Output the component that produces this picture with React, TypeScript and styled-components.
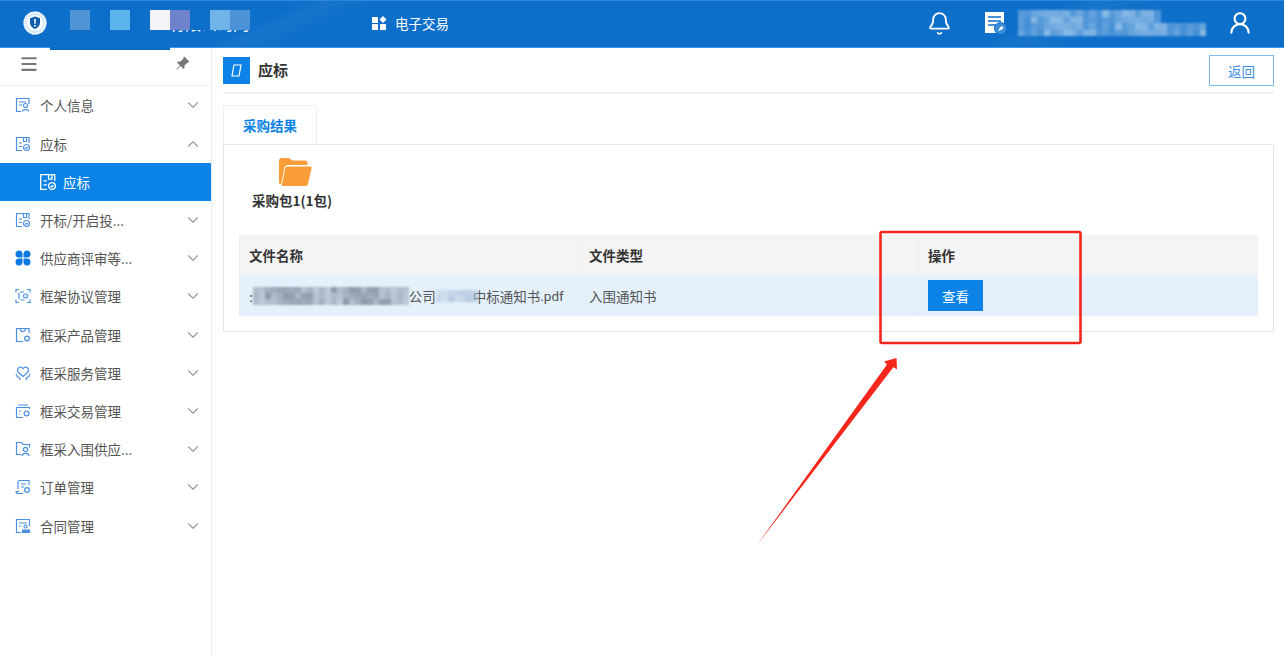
import React from "react"
import styled, { createGlobalStyle } from "styled-components"
import { Bell, ChevronDown, ChevronUp, Menu, UserRound } from "lucide-react"
import { BsPinAngleFill } from "react-icons/bs"

const GlobalStyle = createGlobalStyle`
  html, body {
    margin: 0;
    padding: 0;
    width: 1284px;
    height: 656px;
    overflow: hidden;
    background: #fff;
  }
  body {
    font-family: "Noto Sans CJK SC", "Noto Sans", sans-serif;
    font-size: 13.5px;
    color: #555;
  }
  * { box-sizing: border-box; }
`

const Page = styled.div`
  position: relative;
  width: 1284px;
  height: 656px;
  display: flex;
  flex-direction: column;
`

const Header = styled.header`
  position: relative;
  flex: 0 0 48px;
  display: flex;
  align-items: center;
  padding: 0 31px 2px 23px;
  color: #fff;
  background:
    linear-gradient(155deg, transparent 22%, rgba(255, 255, 255, 0.035) 24%, transparent 27%, transparent 78%, rgba(255, 255, 255, 0.04) 80%, transparent 84%),
    #0e6fca;
  border-top: 1px solid #2e86d8;
  border-bottom: 1px solid #3d95e6;
`

const Brand = styled.div`
  position: relative;
  width: 349px;
  display: flex;
  align-items: center;
`

/* only the lower edge of the name shows in the screenshot, the rest is redacted */
const BrandName = styled.span`
  margin-left: 122px;
  font-size: 16px;
  line-height: 24px;
  white-space: nowrap;
  clip-path: inset(19px 0 0 0);
`

const BrandBlock = styled.i<{ $left: number; $color: string }>`
  position: absolute;
  top: -1px;
  left: ${(p) => p.$left - 23}px;
  width: 20px;
  height: 20px;
  background: ${(p) => p.$color};
`

const Underline = styled.i`
  position: absolute;
  left: 50px;
  top: 46px;
  width: 120px;
  height: 3px;
  background: #0d6ac2;
`

const Trade = styled.div`
  display: flex;
  align-items: center;
  gap: 8px;
  font-size: 13.5px;
  flex: 1;
`

const Bellwrap = styled.div`
  display: flex;
  margin-right: 32px;
`

const Account = styled.div`
  display: flex;
  align-items: center;
  gap: 11px;
  margin-right: 21px;
`

const MosaicBox = styled.div<{ $cell: number; $blur: number; $overlap?: number }>`
  position: relative;
  display: flex;
  flex-direction: column;
  filter: blur(${(p) => p.$blur}px);
  margin-right: ${(p) => -(p.$overlap ?? 0)}px;
  & > div {
    display: flex;
    height: ${(p) => p.$cell}px;
  }
`

const MosaicCell = styled.span<{ $cell: number }>`
  display: block;
  width: ${(p) => p.$cell}px;
  height: 100%;
`

const Body = styled.div`
  flex: 1;
  display: flex;
  min-height: 0;
`

const Side = styled.aside`
  flex: 0 0 212px;
  border-right: 1px solid #ececec;
`

const SideTop = styled.div`
  height: 38.4px;
  padding: 0 21px 6px 19px;
  display: flex;
  align-items: center;
  justify-content: space-between;
  border-bottom: 1px solid #f3f3f3;
  color: #777;
`

const Row = styled.div<{ $active?: boolean; $child?: boolean }>`
  height: 38.2px;
  display: flex;
  align-items: center;
  gap: ${(p) => (p.$child ? 6 : 9)}px;
  padding: 0 9px 0 ${(p) => (p.$child ? 39 : 15)}px;
  color: ${(p) => (p.$active ? "#fff" : "#555")};
  background: ${(p) => (p.$active ? "#0a82e6" : "transparent")};
  white-space: nowrap;
  svg { flex: none; }
`

const RowText = styled.span`
  flex: 1;
`

const Main = styled.main`
  flex: 1;
  padding: 0 12px 0 11px;
`

const TitleBar = styled.div`
  height: 46px;
  display: flex;
  align-items: flex-start;
  border-bottom: 2px solid #f2f2f2;
  padding-top: 7px;
`

const TitleBadge = styled.span`
  width: 27px;
  height: 27px;
  margin-top: 2px;
  background: #0a82e6;
  display: flex;
  align-items: center;
  justify-content: center;
`

const TitleText = styled.h1`
  flex: 1;
  margin: 1px 0 0 8px;
  font-size: 15px;
  line-height: 27px;
  font-weight: 700;
  color: #333;
`

const BackButton = styled.button`
  width: 65px;
  height: 31px;
  background: #fff;
  border: 1px solid #7dbcf0;
  color: #3f8fdf;
  font: inherit;
  padding: 0;
`

const Tabs = styled.div`
  margin-top: 11px;
  height: 39px;
  display: flex;
`

const Tab = styled.div`
  width: 94px;
  border: 1px solid #f0f0f0;
  border-bottom: none;
  color: #0a82e6;
  font-weight: 700;
  display: flex;
  align-items: center;
  justify-content: center;
`

const Panel = styled.section`
  height: 188px;
  border: 1px solid #e6e6e6;
  padding: 13px 15px 15px;
`

const Package = styled.div`
  width: 106px;
  height: 77px;
  display: flex;
  flex-direction: column;
  align-items: center;
  gap: 4px;
  font-weight: 700;
  color: #333;
  line-height: 20px;
  font-size: 13.5px;
  svg { margin-left: 6px; }
`

const Table = styled.div`
  display: grid;
  grid-template-columns: 340px 339px 340px;
  grid-template-rows: 40px 41px;
`

const HeadCell = styled.div`
  background: #f4f4f4;
  padding: 0 10px 0 9px;
  display: flex;
  align-items: center;
  font-weight: 700;
  color: #333;
  border-left: 1px solid #f0f0f0;
`

const Cell = styled.div`
  background: #e4f0fb;
  padding: 0 10px 0 9px;
  display: flex;
  align-items: center;
  white-space: nowrap;
  color: #555;
  border-left: 1px solid #e1edf8;
`

const FileExt = styled.span`
  font-family: Roboto, "Noto Sans", sans-serif;
`

const ViewButton = styled.button`
  width: 55px;
  height: 31px;
  background: #0a82e6;
  color: #fff;
  border: none;
  font: inherit;
  padding: 0;
`

const Annotation = styled.svg`
  position: absolute;
  left: 0;
  top: 0;
  pointer-events: none;
`

// a small repeatable pattern, the redacted bits of the screenshot
const tones = [3, 7, 1, 5, 8, 2, 6, 4, 9, 2, 5, 7, 1, 8, 3, 6, 2, 9, 4, 1, 7, 5, 3, 8]

type MosaicProps = { rows: number[]; cell: number; rgb: string; max: number; blur: number; overlap?: number }

const Mosaic = ({ rows, cell, rgb, max, blur, overlap }: MosaicProps) => (
  <MosaicBox $cell={cell} $blur={blur} $overlap={overlap}>
    {rows.map((count, r) => (
      <div key={r}>
        {Array.from({ length: count }, (_, c) => {
          const tone = 0.4 + (tones[(c * 5 + r * 7) % tones.length] / 9) * 0.6
          return <MosaicCell key={c} $cell={cell} style={{ background: `rgba(${rgb}, ${(tone * max).toFixed(2)})` }} />
        })}
      </div>
    ))}
  </MosaicBox>
)

const Logo = () => (
  <svg width="24" height="24" viewBox="0 0 24 24">
    <circle cx="12" cy="12" r="11.5" fill="#cfe6f8" />
    <circle cx="12" cy="12" r="10.5" fill="none" stroke="#fff" strokeWidth="2" strokeDasharray="1.5 1" />
    <circle cx="12" cy="12" r="8" fill="#fff" />
    <path d="M12 5.500l5 1.800v4.200c0 3.200-2.200 5.400-5 6.500-2.800-1.100-5-3.300-5-6.500V7.300z" fill="#0d5fae" />
    <path d="M11.100 8h1.800l-.3 5h-1.200zM11.100 14h1.800v1.600h-1.800z" fill="#fff" />
  </svg>
)

const AppsIcon = () => (
  <svg width="15" height="14" viewBox="0 0 15 14" fill="#fff">
    <rect x="0" y="1" width="6" height="6" rx="0.5" />
    <rect x="0" y="8" width="6" height="6" rx="0.5" />
    <rect x="8" y="8" width="6" height="6" rx="0.5" />
    <path d="M11 0l3.500 3.500L11 7 7.500 3.500z" />
  </svg>
)

const NoteIcon = () => (
  <svg width="23" height="24" viewBox="0 0 23 24">
    <path d="M1 1h19v21H1z" fill="#fff" />
    <path d="M4 6h13M4 10h13M4 14h8" stroke="#0e6fca" strokeWidth="1.400" />
    <circle cx="16.500" cy="17.500" r="6" fill="#3f8fd8" stroke="#0e6fca" />
    <path d="M14 20l2-3.500 2-1.500 1.500 1.500-1.500 2z" fill="#fff" />
  </svg>
)

const FolderIcon = () => (
  <svg width="33" height="28" viewBox="0 0 33 28">
    <path d="M0 3a3 3 0 0 1 3-3h7l3 2.500h13a2.500 2.500 0 0 1 2.500 2.500v2H8.500a3 3 0 0 0-3 2.500L2 26.500A2.500 2.500 0 0 1 0 24z" fill="#fb9d36" />
    <path d="M8.500 8.500h22.500a1.500 1.500 0 0 1 1.500 2l-3.500 15.500a2.500 2.500 0 0 1-2.500 2H4.500a1.500 1.500 0 0 1-1.500-2l3.200-15.500a2.500 2.500 0 0 1 2.300-2z" fill="#fb9d36" />
  </svg>
)

const stroke = { fill: "none", stroke: "#4a90e2", strokeWidth: 1.200 }

const icons: Record<string, React.ReactNode> = {
  person: (
    <g {...stroke}>
      <path d="M14 7V1.500H1.500v13H6" />
      <path d="M4 5h7M4 8h3" />
      <circle cx="10.500" cy="8.500" r="2" />
      <path d="M7.500 14.500c.3-2.500 5.700-2.500 6 0" />
    </g>
  ),
  bid: (
    <g {...stroke}>
      <path d="M14 7V1.500H1.500v13H7" />
      <path d="M8.500 1.500v4h3v-4M4 7h3M4 10.500h3" />
      <circle cx="11.500" cy="11.500" r="3" />
      <path d="M10.200 11.500l1 1 1.600-1.600" />
    </g>
  ),
  clover: (
    <g fill="#0a7ae2">
      <path d="M7.500 7.500H3.500a3.500 3.500 0 1 1 4-4z" />
      <path d="M8.500 7.500h4a3.500 3.500 0 1 0-4-4z" />
      <path d="M7.500 8.500H3.500a3.500 3.500 0 1 0 4 4z" />
      <path d="M8.500 8.500h4a3.500 3.500 0 1 1-4 4z" />
    </g>
  ),
  frame: (
    <g {...stroke}>
      <path d="M1 4.500V1.500h3M12 1.500h3v3M1 11.500v3h3M12 14.500h3v-3" />
      <path d="M5 4h4M4 5v6M5.500 12h4" />
      <circle cx="10.500" cy="8" r="2" />
    </g>
  ),
  product: (
    <g {...stroke}>
      <path d="M14 6V1.500H1.500v13H8" />
      <path d="M5 1.500c0 4 5.500 4 5.500 0" />
      <circle cx="12" cy="11.500" r="2.400" />
    </g>
  ),
  service: (
    <g {...stroke}>
      <path d="M8 11.500L3.500 7.500a3 3 0 0 1 0-4.500c1.500-1.300 3.300-.8 4.500.5 1.200-1.300 3-1.800 4.500-.5a3 3 0 0 1 0 4.500z" />
      <path d="M1 9c.5 2.500 2 3.500 3.500 4L5 15M15 9c-.5 2.500-2 3.500-3.500 4l-.5 2" />
    </g>
  ),
  trade: (
    <g {...stroke}>
      <path d="M3 2h10M14.500 6V4.500h-13v10H8" />
      <path d="M4 8h2M4 11h1" />
      <circle cx="11.500" cy="10.500" r="2.400" />
    </g>
  ),
  group: (
    <g {...stroke}>
      <path d="M6 13.500H1.500v-12h5l1.500 2h6.500v3" />
      <circle cx="10.500" cy="8.500" r="2.200" />
      <path d="M7 15c.3-3.500 6.700-3.500 7 0" />
    </g>
  ),
  order: (
    <g {...stroke}>
      <path d="M3 10V3a1.500 1.500 0 0 1 1.500-1.500H14V6M1 12.500a2 2 0 0 0 2 2h5M4 12.500H1" />
      <path d="M6 5h5M6 8h3" />
      <circle cx="12" cy="11" r="2.400" />
    </g>
  ),
  contract: (
    <g {...stroke}>
      <path d="M6 14.500H1.500v-13h13V8" />
      <path d="M4 5h8M4 8h2" />
      <circle cx="10.500" cy="8.500" r="1.500" />
      <path d="M7.500 14.500v-2.500h7v2.500z" fill="#4a90e2" />
    </g>
  ),
}

const MenuIcon = ({ name, light }: { name: string; light?: boolean }) => (
  <svg width={light ? 18 : 16} height={light ? 18 : 16} viewBox="0 0 16 16" style={light ? { filter: "brightness(0) invert(1)" } : undefined}>
    {icons[name]}
  </svg>
)

const menu = [
  { icon: "person", label: "个人信息" },
  { icon: "bid", label: "应标", open: true },
  { icon: "bid", label: "开标/开启投..." },
  { icon: "clover", label: "供应商评审等..." },
  { icon: "frame", label: "框架协议管理" },
  { icon: "product", label: "框采产品管理" },
  { icon: "service", label: "框采服务管理" },
  { icon: "trade", label: "框采交易管理" },
  { icon: "group", label: "框采入围供应..." },
  { icon: "order", label: "订单管理" },
  { icon: "contract", label: "合同管理" },
]

const App = () => {
  return (
    <Page>
      <GlobalStyle />
      <Header>
        <Brand>
          <Logo />
          <BrandName>有限公司网</BrandName>
          <BrandBlock $left={70} $color="#4f94d4" />
          <BrandBlock $left={110} $color="#5bb4ea" />
          <BrandBlock $left={150} $color="#f6f3f8" />
          <BrandBlock $left={170} $color="#6f82cc" />
          <BrandBlock $left={210} $color="#70b4ea" />
          <BrandBlock $left={230} $color="#4b93d6" />
        </Brand>
        <Trade>
          <AppsIcon />
          电子交易
        </Trade>
        <Bellwrap>
          <Bell size={25} strokeWidth={1.7} />
        </Bellwrap>
        <Account>
          <NoteIcon />
          <Mosaic rows={[22, 22, 29, 29]} cell={6.5} rgb="255, 255, 255" max={0.5} blur={1} />
        </Account>
        <UserRound size={26} strokeWidth={2} />
        <Underline />
      </Header>
      <Body>
        <Side>
          <SideTop>
            <Menu size={20} strokeWidth={2.5} />
            <BsPinAngleFill size={15} />
          </SideTop>
          {menu.map((item) => (
            <React.Fragment key={item.label}>
              <Row>
                <MenuIcon name={item.icon} />
                <RowText>{item.label}</RowText>
                {item.open ? (
                  <ChevronUp size={18} color="#999" strokeWidth={1.5} />
                ) : (
                  <ChevronDown size={18} color="#999" strokeWidth={1.5} />
                )}
              </Row>
              {item.open && (
                <Row $active $child>
                  <MenuIcon name="bid" light />
                  <RowText>应标</RowText>
                </Row>
              )}
            </React.Fragment>
          ))}
        </Side>
        <Main>
          <TitleBar>
            <TitleBadge>
              <svg width="11" height="13" viewBox="0 0 11 13" fill="none" stroke="#fff" strokeWidth="1.200">
                <path d="M3 1h7L8 12H1z" />
              </svg>
            </TitleBadge>
            <TitleText>应标</TitleText>
            <BackButton>返回</BackButton>
          </TitleBar>
          <Tabs>
            <Tab>采购结果</Tab>
          </Tabs>
          <Panel>
            <Package>
              <FolderIcon />
              采购包1(1包)
            </Package>
            <Table>
              <HeadCell>文件名称</HeadCell>
              <HeadCell>文件类型</HeadCell>
              <HeadCell>操作</HeadCell>
              <Cell>
                <span>:</span>
                <Mosaic rows={[26, 26, 26]} cell={6} rgb="120, 132, 150" max={0.8} blur={0.8} />
                <span>公司</span>
                <Mosaic rows={[7, 7]} cell={6} rgb="165, 190, 215" max={0.7} blur={1} overlap={5} />
                <span>中标通知书</span>
                <FileExt>.pdf</FileExt>
              </Cell>
              <Cell>入围通知书</Cell>
              <Cell>
                <ViewButton>查看</ViewButton>
              </Cell>
            </Table>
          </Panel>
        </Main>
      </Body>
      <Annotation width="1284" height="656" viewBox="0 0 1284 656">
        <rect x="880.500" y="232" width="200" height="111" rx="1.500" fill="none" stroke="#f5261b" strokeWidth="2.600" />
        <path d="M757 545L887 364.500 884 361.500 896.500 358 897 369.500 893.500 367z" fill="#f5261b" />
      </Annotation>
    </Page>
  )
}

export default App
